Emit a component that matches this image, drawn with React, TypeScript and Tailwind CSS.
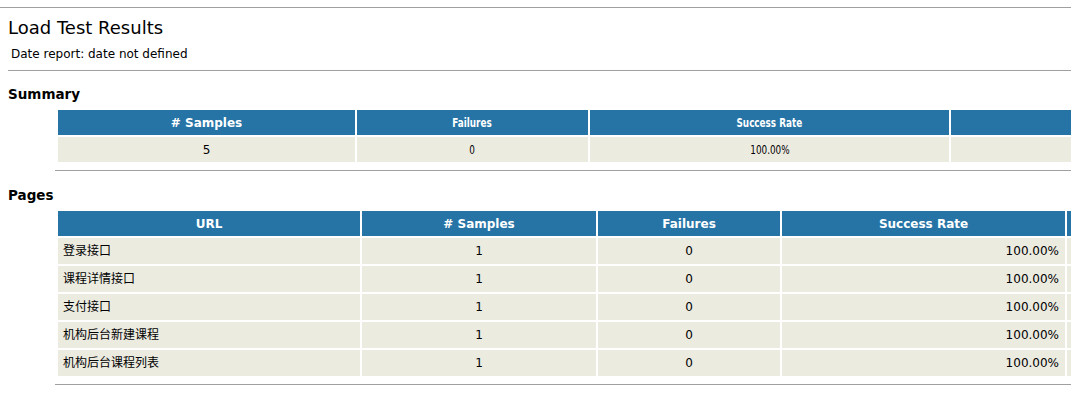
import React from "react";

const FONT = { fontFamily: '"DejaVu Sans", Verdana, "Noto Sans CJK SC", sans-serif' };

type Col = { w: string; label: string; narrow?: boolean };

const summaryCols: Col[] = [
  { w: "w-[297px]", label: "# Samples" },
  { w: "w-[231px]", label: "Failures", narrow: true },
  { w: "w-[359px]", label: "Success Rate", narrow: true },
  { w: "w-[200px]", label: "" },
];

const pageRows = ["登录接口", "课程详情接口", "支付接口", "机构后台新建课程", "机构后台课程列表"];

function Narrow({ on, children }: { on?: boolean; children: React.ReactNode }) {
  return on ? <span className="inline-block text-[13px] scale-x-[0.68]">{children}</span> : <>{children}</>;
}

export default function App() {
  return (
    <div className="w-[1071px] h-[394px] overflow-hidden bg-white text-black" style={FONT}>
      <div className="mt-[7px] h-px bg-[#a0a0a0]" />
      <div className="pl-[8px]">
        <h1 className="mt-[9px] text-[18px] leading-[22px] font-normal">Load Test Results</h1>
        <div className="mt-[7px] pl-[3px] text-[12px] leading-[16px]">Date report: date not defined</div>
        <div className="mt-[8px] h-px bg-[#a0a0a0]" />
        <h2 className="mt-[15px] text-[13.5px] leading-[16px] font-bold">Summary</h2>
        <div className="mt-[8px] ml-[50px] flex flex-col gap-[2px] text-[12px]">
          <div className="flex gap-[2px]">
            {summaryCols.map((c, i) => (
              <div
                key={i}
                className={`${c.w} shrink-0 h-[25px] bg-[#2674a6] text-white font-bold flex items-center justify-center whitespace-nowrap`}
              >
                <Narrow on={c.narrow}>{c.label}</Narrow>
              </div>
            ))}
          </div>
          <div className="flex gap-[2px]">
            {["5", "0", "100.00%", ""].map((v, i) => (
              <div
                key={i}
                className={`${summaryCols[i].w} shrink-0 h-[25px] bg-[#ecebe0] flex items-center justify-center whitespace-nowrap`}
              >
                <Narrow on={summaryCols[i].narrow}>{v}</Narrow>
              </div>
            ))}
          </div>
        </div>
        <div className="mt-[8px] ml-[47px] h-px bg-[#a0a0a0]" />
        <h2 className="mt-[16px] text-[13.5px] leading-[16px] font-bold">Pages</h2>
        <div className="mt-[8px] ml-[50px] flex flex-col gap-[2px] text-[12px]">
          <div className="flex gap-[2px] text-white font-bold">
            <div className="w-[302px] shrink-0 h-[25px] bg-[#2674a6] flex items-center justify-center">URL</div>
            <div className="w-[234px] shrink-0 h-[25px] bg-[#2674a6] flex items-center justify-center"># Samples</div>
            <div className="w-[182px] shrink-0 h-[25px] bg-[#2674a6] flex items-center justify-center">Failures</div>
            <div className="w-[283px] shrink-0 h-[25px] bg-[#2674a6] flex items-center justify-center">Success Rate</div>
            <div className="w-[100px] shrink-0 h-[25px] bg-[#2674a6]" />
          </div>
          {pageRows.map((name) => (
            <div key={name} className="flex gap-[2px] whitespace-nowrap">
              <div className="w-[302px] shrink-0 h-[26px] bg-[#ecebe0] flex items-center pl-[5px]">{name}</div>
              <div className="w-[234px] shrink-0 h-[26px] bg-[#ecebe0] flex items-center justify-center">1</div>
              <div className="w-[182px] shrink-0 h-[26px] bg-[#ecebe0] flex items-center justify-center">0</div>
              <div className="w-[283px] shrink-0 h-[26px] bg-[#ecebe0] flex items-center justify-end pr-[6px]">100.00%</div>
              <div className="w-[100px] shrink-0 h-[26px] bg-[#ecebe0]" />
            </div>
          ))}
        </div>
        <div className="mt-[8px] ml-[47px] h-px bg-[#a0a0a0]" />
      </div>
    </div>
  );
}
